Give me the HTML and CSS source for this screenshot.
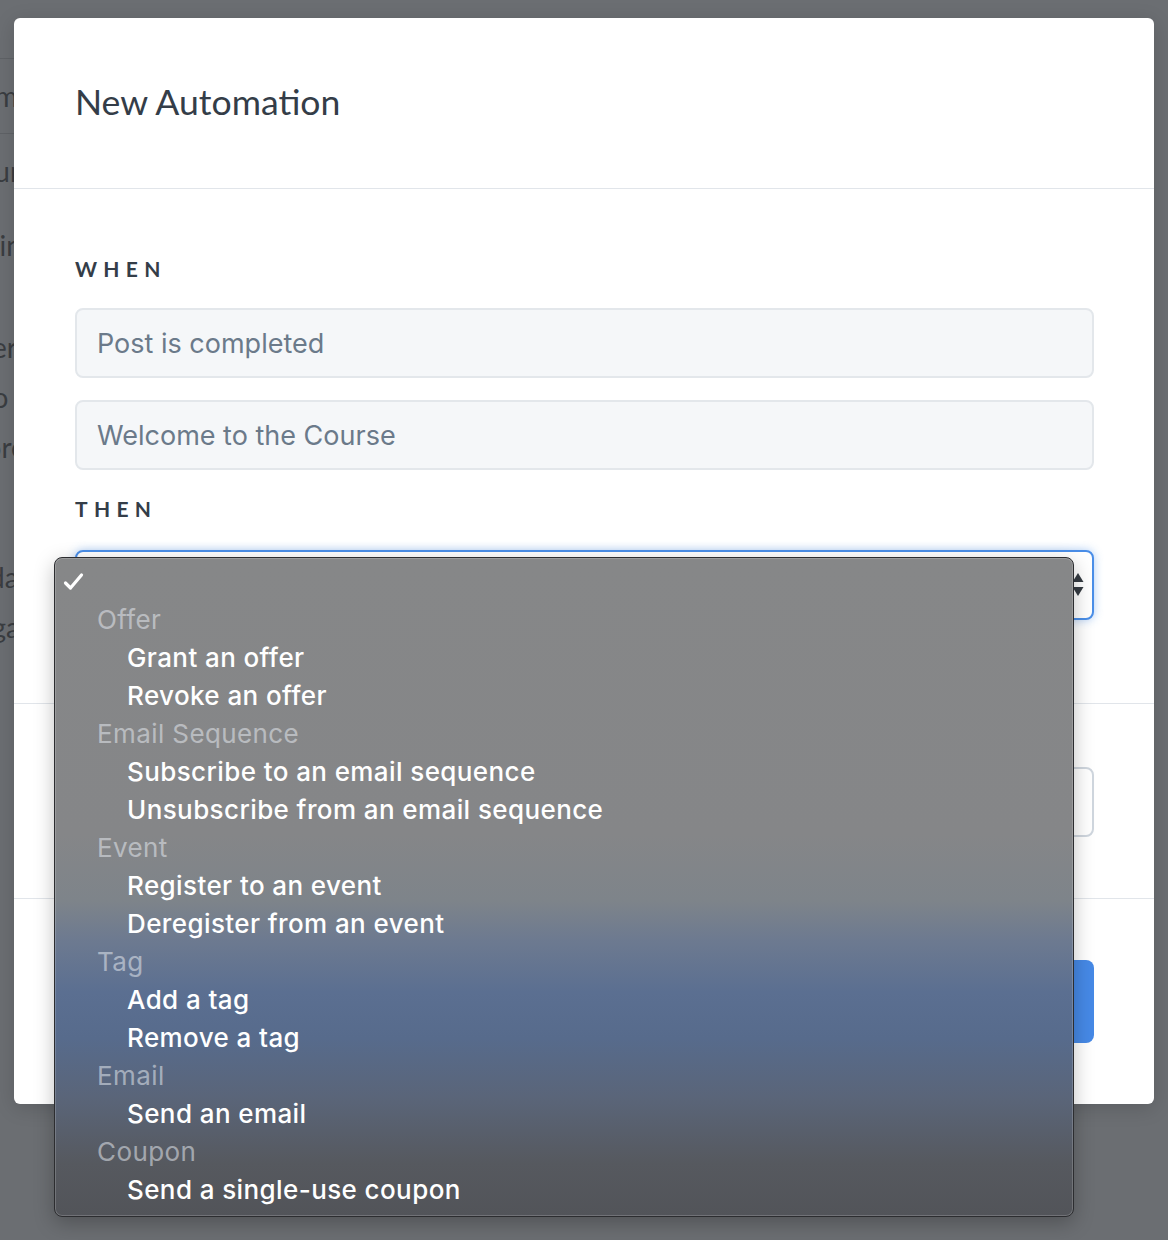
FILE: index.html
```html
<!DOCTYPE html>
<html>
<head>
<meta charset="utf-8">
<link rel="stylesheet" href="styles.css">
</head>
<body>
<div class="page">
  <div class="page-rule"></div>
  <div class="page-line big">Name</div>
  <div class="page-rule"></div>
  <div class="page-line big">Course</div>
  <div class="page-line big">Main</div>
  <div class="page-gap"></div>
  <div class="page-line">Users</div>
  <div class="page-line">Info</div>
  <div class="page-line">More</div>
  <div class="page-gap2"></div>
  <div class="page-line">Today</div>
  <div class="page-line">Engage</div>
</div>
<div class="overlay"></div>

<div class="modal">
  <div class="modal-header">
    <h1 class="modal-title">New Automation</h1>
  </div>
  <div class="modal-section first">
    <div class="label">WHEN</div>
    <div class="field">Post is completed</div>
    <div class="field">Welcome to the Course</div>
    <div class="label then">THEN</div>
    <div class="field select">
      <span class="select-arrows">
        <svg width="12" height="26" viewBox="0 0 12 26"><path d="M6 1 L11.5 10 L0.5 10 Z" fill="#353b42"/><path d="M0.5 15 L11.5 15 L6 24 Z" fill="#353b42"/></svg>
      </span>
    </div>
  </div>
  <div class="modal-section second">
    <div class="field plain"></div>
  </div>
  <div class="modal-footer">
    <button class="btn-primary">Create</button>
  </div>
</div>

<div class="dropdown">
  <div class="opt check"><svg class="tick" width="22" height="20" viewBox="0 0 22 20"><path d="M2.5 11 L7.5 16 L18.5 3" fill="none" stroke="#fff" stroke-width="3.2" stroke-linecap="round" stroke-linejoin="round"/></svg></div>
  <div class="grp">Offer</div>
  <div class="opt">Grant an offer</div>
  <div class="opt">Revoke an offer</div>
  <div class="grp">Email Sequence</div>
  <div class="opt">Subscribe to an email sequence</div>
  <div class="opt">Unsubscribe from an email sequence</div>
  <div class="grp">Event</div>
  <div class="opt">Register to an event</div>
  <div class="opt">Deregister from an event</div>
  <div class="grp">Tag</div>
  <div class="opt">Add a tag</div>
  <div class="opt">Remove a tag</div>
  <div class="grp">Email</div>
  <div class="opt">Send an email</div>
  <div class="grp">Coupon</div>
  <div class="opt">Send a single-use coupon</div>
</div>
</body>
</html>
```

FILE: styles.css
```css
html, body {
  margin: 0;
  padding: 0;
}
body {
  width: 1168px;
  height: 1240px;
  overflow: hidden;
  background: #ffffff;
  font-family: Lato, "Liberation Sans", sans-serif;
  position: relative;
}
.page {
  margin-left: -40px;
  padding-top: 58px;
  color: #333;
  font-family: Lato, sans-serif;
}
.page-rule {
  border-top: 1px solid #ccc;
  width: 100px;
}
.page-line {
  font-size: 28px;
  line-height: 50px;
}
.page-line.big {
  line-height: 74px;
}
.page-gap { height: 40px; }
.page-gap2 { height: 80px; }
.overlay {
  position: absolute;
  inset: 0;
  background: rgba(60, 64, 70, 0.76);
}
.modal {
  position: absolute;
  left: 14px;
  top: 18px;
  width: 1140px;
  height: 1086px;
  background: #fff;
  border-radius: 6px;
  box-shadow: 0 4px 20px rgba(0,0,0,0.15);
  box-sizing: border-box;
}
.modal-header {
  height: 171px;
  border-bottom: 1px solid #e1e5ea;
  box-sizing: border-box;
  padding: 62px 61px 0;
}
.modal-title {
  margin: 0;
  font-family: Lato, sans-serif;
  font-weight: 400;
  font-size: 35.6px;
  line-height: 44px;
  color: #343d48;
}
.modal-section {
  padding: 0 60px 0 61px;
  border-bottom: 1px solid #e1e5ea;
}
.modal-section.first {
  padding-top: 66px;
  height: 515px;
  box-sizing: border-box;
}
.modal-section.second {
  padding-top: 63px;
  height: 195px;
  box-sizing: border-box;
}
.label {
  font-family: Lato, sans-serif;
  font-weight: 700;
  font-size: 21px;
  line-height: 28px;
  letter-spacing: 6.3px;
  color: #343d48;
  margin-bottom: 25px;
}
.label.then {
  margin-top: 25px;
  margin-bottom: 27px;
}
.field {
  height: 70px;
  box-sizing: border-box;
  border: 2px solid #e3e7eb;
  border-radius: 8px;
  background: #f5f7f9;
  padding: 0 20px;
  display: flex;
  align-items: center;
  font-family: Inter, "Noto Sans", sans-serif;
  font-size: 27px;
  color: #6b7a8a;
  margin-bottom: 22px;
}
.field.select {
  background: #fff;
  border: 2px solid #4a8ee8;
  box-shadow: 0 0 10px rgba(74, 142, 232, 0.45);
  justify-content: flex-end;
  padding-right: 8px;
}
.field.plain {
  background: #fff;
  border-color: #cfd6de;
  margin: 0;
}
.select-arrows {
  display: flex;
}
.modal-footer {
  display: flex;
  justify-content: flex-end;
  padding: 61px 60px 0 61px;
}
.btn-primary {
  width: 200px;
  height: 83px;
  border: none;
  border-radius: 8px;
  background: #4689e6;
  color: #fff;
  font-family: Lato, sans-serif;
  font-size: 24px;
}
.dropdown {
  position: absolute;
  left: 54px;
  top: 557px;
  width: 1020px;
  height: 660px;
  box-sizing: border-box;
  border: 1px solid #2c2d30;
  border-radius: 8px;
  box-shadow: inset 0 0 0 1px rgba(255,255,255,0.18), 0 6px 20px rgba(0,0,0,0.25);
  background: linear-gradient(to bottom,
    #868788 0%,
    #858688 42%,
    #7e848a 52%,
    #6d7a90 58%,
    #5b6f91 66%,
    #576b8c 73%,
    #5a6579 82%,
    #56595f 92%,
    #525459 100%);
  padding-top: 5px;
  font-family: Inter, "Noto Sans", sans-serif;
  font-size: 26px;
  letter-spacing: 0.4px;
}
.opt, .grp {
  height: 38px;
  line-height: 38px;
  white-space: nowrap;
}
.grp {
  padding-left: 42px;
  color: rgba(230, 234, 240, 0.55);
  font-weight: 400;
}
.opt {
  padding-left: 72px;
  color: #fff;
  font-weight: 500;
}
.opt.check {
  padding-left: 8px;
  display: flex;
  align-items: center;
}
.tick {
  display: block;
}
```
